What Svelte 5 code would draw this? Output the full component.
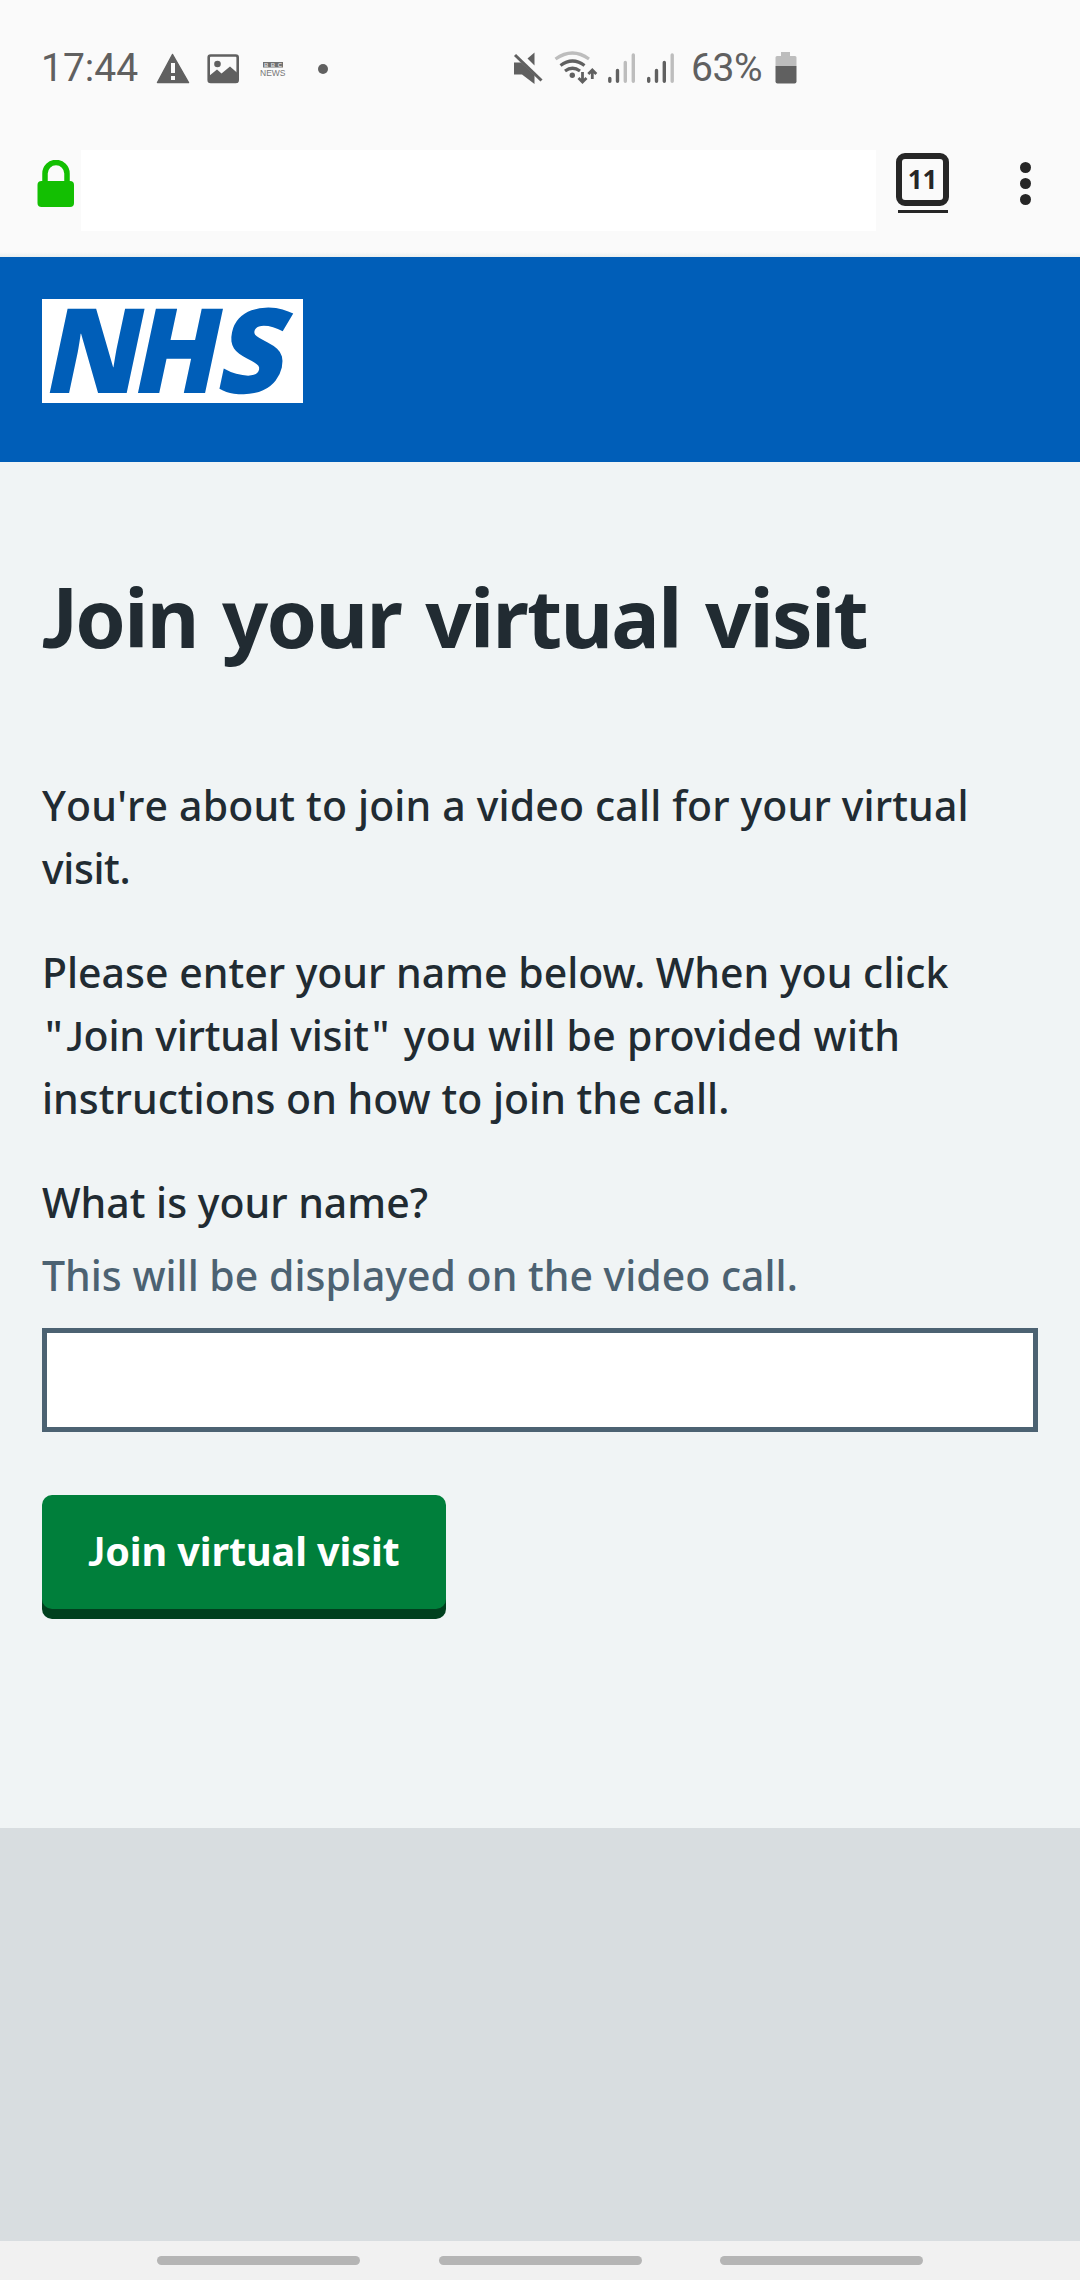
<script>
  let name = $state('');
</script>

<div class="screen">
  <div class="status">
    <span class="time">17:44</span>
    <svg class="notes" width="174" height="40" viewBox="156 46 174 40">
      <path d="M172.500 52.500 188.500 80.500H157.500Z" fill="#606060" stroke="#606060" stroke-width="1.500" stroke-linejoin="round" />
      <path d="M171 61h4v10h-4zM171 74h4v4h-4z" fill="#fafafa" />
      <rect x="208.700" y="53.500" width="29" height="26.500" rx="2" fill="none" stroke="#606060" stroke-width="2.600" />
      <circle cx="217.500" cy="62" r="3.300" fill="#606060" />
      <path d="M209 74 217 67.500 221.500 71.500 230 64.500 238 71.500V80.500H209Z" fill="#606060" />
      <path d="M263 60h20v5.500h-20z" fill="#707070" />
      <text x="264" y="65" class="bbc" textLength="18">BBC</text>
      <text x="260" y="74" class="news" textLength="25.500" lengthAdjust="spacingAndGlyphs">NEWS</text>
      <circle cx="323" cy="67" r="5" fill="#606060" />
    </svg>
    <svg class="radios" width="166" height="40" viewBox="510 46 166 40">
      <g fill="#606060">
        <path d="M514 60.500h7L534.500 73V82L522 72.500H514Z" />
        <path d="M527.500 56.500 534.500 50.500V63.500Z" />
        <path d="M515 53 541.500 78.500" stroke="#606060" stroke-width="3" />
        <circle cx="572.300" cy="73.300" r="2.700" />
      </g>
      <g fill="none" stroke-width="3.200">
        <path d="M555.500 57Q572.500 45 589 57" stroke="#bdbdbd" />
        <path d="M560.500 63.500Q572.500 54.500 584.500 63.500" stroke="#606060" />
        <path d="M565 69Q572.500 63.500 580 69" stroke="#606060" />
        <path d="M582.500 70V80M578.500 76 582.500 80 586.500 76M592.300 77V68M588.300 72 592.300 68 596.300 72" stroke="#606060" stroke-width="2.800" />
      </g>
      <g stroke-width="3.400" stroke-linecap="round" stroke="#606060">
        <path d="M609.800 76.500V79.300M617.500 68.500V79.300M648.700 76.500V79.300M656.500 68.500V79.300M664.300 60.500V79.300" />
        <path d="M625.300 60.500V79.300M633.300 53V79.300M672.200 53V79.300" stroke="#bdbdbd" />
      </g>
    </svg>
    <span class="percent">63%</span>
    <svg width="22" height="34" viewBox="0 0 22 34">
      <path d="M6 1h9v4h5q1.500 0 1.500 1.500V15H.500V6.500Q.500 5 2 5H6Z" fill="#bdbdbd" />
      <path d="M.500 15h21v15.500q0 2-2 2h-17q-2 0-2-2Z" fill="#606060" />
    </svg>
  </div>

  <div class="toolbar">
    <svg width="38" height="48" viewBox="0 0 38 48">
      <path d="M8 24V13.500a11 11 0 0 1 22 0V24" fill="none" stroke="#13bf02" stroke-width="5.500" />
      <rect x=".500" y="21" width="36.500" height="26" rx="4" fill="#13bf02" />
    </svg>
    <div class="url"></div>
    <div class="tabs"><span class="count">11</span></div>
    <div class="more"><i></i><i></i><i></i></div>
  </div>

  <header>
    <svg class="logo" width="261" height="104" viewBox="0 0 261 104" role="img" aria-label="NHS">
      <path d="M0 0h261v104H0z" fill="#fff" />
      <g class="nhs">
        <text transform="translate(-1 94.300) skewX(-12) scale(.96 1)">N</text>
        <text transform="translate(87.500 94.300) skewX(-12) scale(.93 1)">H</text>
        <text transform="translate(171.500 94.300) skewX(-12) scale(.98 1)">S</text>
      </g>
    </svg>
  </header>

  <main>
    <h1><span class="j">J</span>oin your virtual visit</h1>
    <p><span class="l1">You're about to join a video call for your virtual</span><br /><span class="l2">visit.</span></p>
    <p><span class="l3">Please enter your name below. When you click</span><br /><span class="quoted"><span class="quote">"</span><span class="j">J</span>oin virtual visit<span class="quote">"</span></span>{' '}<span class="l4">you will be provided with</span><br /><span class="l5">instructions on how to join the call.</span></p>
    <label for="name">What is your name?</label>
    <div class="hint">This will be displayed on the video call.</div>
    <input id="name" bind:value={name} />
    <button type="button"><span class="j">J</span>oin virtual visit</button>
  </main>
  <div class="footer"></div>
  <nav><i></i><i></i><i></i></nav>
</div>

<style>
  :global(body) { margin: 0; background: #fafafa; }
  .screen { width: 1080px; height: 2280px; display: flex; flex-direction: column; overflow: hidden; font-family: "Noto Sans", "Open Sans", sans-serif; color: #212b32; }
  svg { display: block; flex: none; }
  .status { height: 136px; flex: none; box-sizing: border-box; padding: 0 0 0 41px; display: flex; align-items: center; background: #fafafa; color: #606060; font: 400 39px/46px Roboto, sans-serif; }
  .time { width: 115px; }
  .radios { margin-left: 180px; }
  .percent { width: 82px; margin-left: 15px; padding-right: 2px; letter-spacing: -0.4px; }
  .bbc { font: 700 6px "Liberation Sans", sans-serif; fill: #ddd; }
  .news { font: 400 9.500px "Liberation Sans", sans-serif; fill: #777; }
  .toolbar { height: 121px; flex: none; box-sizing: border-box; padding-left: 37px; display: flex; align-items: center; background: linear-gradient(#fafafa 96%, #e9eeee); }
  .url { width: 795px; height: 81px; margin: 0 20px 13px 6px; background: #fff; }
  .toolbar > svg { margin-bottom: 25px; }
  .tabs { width: 53px; height: 60px; margin-bottom: 27px; display: flex; flex-direction: column; justify-content: space-between; align-items: center; }
  .tabs::after { content: ""; width: 50px; height: 3px; background: #262626; }
  .count { width: 41px; height: 41px; border: 6px solid #262626; border-radius: 9px; color: #262626; text-align: center; font: 700 26px/41px "Noto Sans", sans-serif; }
  .more { margin: 0 0 26px 71px; display: flex; flex-direction: column; gap: 5px; }
  .more i { width: 11px; height: 11px; border-radius: 50%; background: #262626; }
  header { height: 205px; flex: none; box-sizing: border-box; padding: 42px; background: #005eb8; }
  .logo { overflow: visible; }
  .nhs { font: 800 118px "Open Sans", sans-serif; fill: #005eb8; }
  main { height: 1366px; flex: none; box-sizing: border-box; padding: 102px 42px 0; background: #f0f4f5; display: flex; flex-direction: column; }
  .j { font-family: Lato, sans-serif; line-height: 1; }
  .quote { margin: 0 4px 0 3px; }
  h1 { margin: 0 0 105px; font-size: 81px; line-height: 105px; font-weight: 700; letter-spacing: -1.700px; word-spacing: 5px; white-space: nowrap; }
  h1 .j { font-weight: 900; }
  p { margin: 0 0 41px; font-size: 41px; line-height: 63px; font-weight: 500; white-space: nowrap; }
  .l1 { letter-spacing: 0.160px; font-kerning: none; }
  .l2 { letter-spacing: -0.400px; }
  .quoted { letter-spacing: -0.200px; }
  .l4 { letter-spacing: 0.300px; }
  .l5 { letter-spacing: 0.030px; }
  label { margin-bottom: 10px; font-size: 41px; line-height: 63px; font-weight: 500; }
  .hint { margin-bottom: 21px; color: #4c6272; font-size: 41px; line-height: 63px; font-weight: 500; }
  input { width: 996px; height: 104px; box-sizing: border-box; border: 5px solid #4c6272; background: #fff; margin: 0 0 63px; border-radius: 0; outline: 0; font-size: 41px; }
  button { width: 404px; height: 114px; border: 0; border-radius: 10px; background: #007f3b; box-shadow: 0 10px 0 #00401e; color: #fff; padding: 0 0 2px; font: 700 39.500px/60px "Noto Sans", sans-serif; letter-spacing: -0.100px; white-space: nowrap; }
  .footer { height: 413px; flex: none; background: #d8dde0; }
  nav { height: 39px; flex: none; box-sizing: border-box; padding: 15px 157px; display: flex; gap: 78.500px; background: #f1f1f1; }
  nav i { width: 203px; height: 9px; flex: none; border-radius: 5px; background: #b5b5b5; }
</style>
